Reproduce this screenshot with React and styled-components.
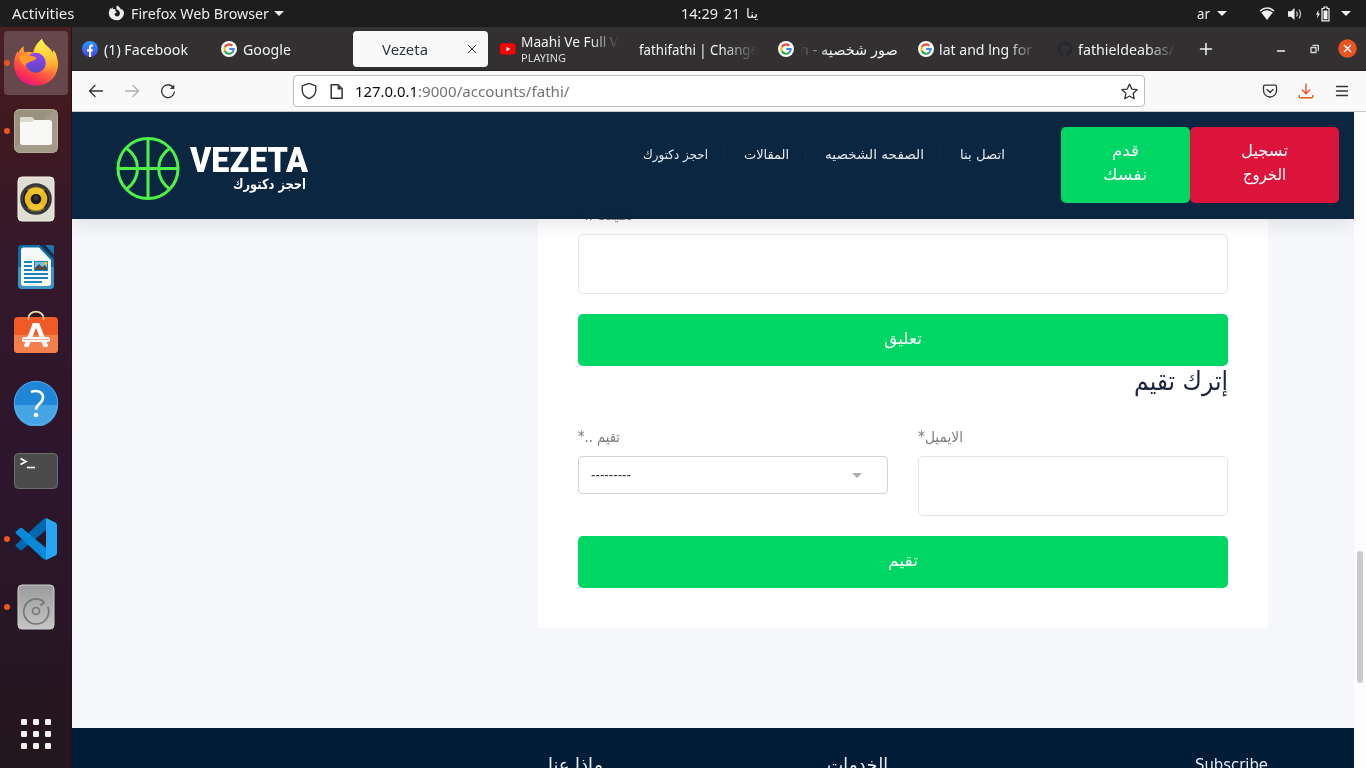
import React, { useLayoutEffect, useRef } from "react";
import styled, { createGlobalStyle } from "styled-components";

const Global = createGlobalStyle`
  *, *::before, *::after { box-sizing: border-box; }
  html, body { margin: 0; padding: 0; overflow: hidden; background: #f6f7fb; }
  body { font-family: "Noto Sans", "DejaVu Sans", sans-serif; }
  svg { display: block; flex: none; }
`;

/* ---------- text that is condensed to a given width ---------- */
const FitBox = styled.span`
  display: inline-block;
  flex: none;
  direction: ltr;
  text-align: left;
  white-space: nowrap;
  vertical-align: top;
  width: ${(p) => p.$w}px;
  font-size: ${(p) => (p.$size ? `${p.$size}px` : "inherit")};
`;
const FitInner = styled.span`
  display: inline-block;
  white-space: pre;
  transform-origin: 0 50%;
`;
function Fit({ w, size, rtl, children }) {
  const ref = useRef(null);
  useLayoutEffect(() => {
    const el = ref.current;
    el.style.transform = "none";
    const natural = el.getBoundingClientRect().width;
    if (natural) el.style.transform = `scaleX(${w / natural})`;
  }, [w, size, children]);
  return (
    <FitBox $w={w} $size={size}>
      <FitInner ref={ref} dir={rtl ? "rtl" : "ltr"}>{children}</FitInner>
    </FitBox>
  );
}

/* ---------- desktop shell ---------- */
const Desktop = styled.div`
  width: 1366px;
  height: 768px;
  display: flex;
  flex-direction: column;
  overflow: hidden;
`;
const TopBar = styled.div`
  height: 27px;
  flex: none;
  display: grid;
  grid-template-columns: 681px 1fr auto;
  align-items: center;
  padding-right: 15px;
  background: #1d1d1d;
  color: #ececec;
  font-size: 14.5px;
  line-height: 27px;
`;
const BarLeft = styled.div`
  display: flex;
  align-items: center;
  padding-left: 12px;
`;
const AppMenu = styled.div`
  display: flex;
  align-items: center;
  gap: 5.5px;
  margin-left: 33.5px;
`;
const Clock = styled.div`
  display: flex;
  gap: 6px;
`;
const Tray = styled.div`
  display: flex;
  align-items: center;
`;
const Caret = styled.i`
  width: 0;
  height: 0;
  border: 5px solid transparent;
  border-top: 5px solid #ececec;
  border-bottom: 0;
  margin-left: ${(p) => p.$gap || 0}px;
`;
const TraySlot = styled.span`
  margin-left: ${(p) => p.$gap}px;
`;
const Body = styled.div`
  flex: 1;
  min-height: 0;
  display: flex;
`;

/* ---------- dock ---------- */
const Dock = styled.nav`
  width: 72px;
  flex: none;
  display: flex;
  flex-direction: column;
  align-items: center;
  gap: 4px;
  padding-top: 4px;
  background: linear-gradient(180deg, #4a2023 0%, #40191f 12%, #35192b 30%, #2e162b 50%, #2b162b 65%, #271624 82%, #23161c 100%);
  border-right: 1px solid #22101f;
`;
const DockItem = styled.div`
  position: relative;
  width: 64px;
  height: 64px;
  display: flex;
  align-items: center;
  justify-content: center;
  padding-bottom: ${(p) => p.$lift || 0}px;
  border-radius: 4px;
  background: ${(p) => (p.$active ? "#66474b" : "transparent")};
  margin-top: ${(p) => (p.$last ? "auto" : 0)};
  margin-bottom: ${(p) => (p.$last ? "2px" : 0)};
  &::before {
    content: "";
    display: ${(p) => (p.$running ? "block" : "none")};
    position: absolute;
    left: 0;
    top: 29px;
    width: 6px;
    height: 6px;
    border-radius: 50%;
    background: #e95420;
  }
`;

/* ---------- browser ---------- */
const Browser = styled.main`
  flex: 1;
  min-width: 0;
  display: flex;
  flex-direction: column;
`;
const TabStrip = styled.div`
  height: 44px;
  flex: none;
  display: flex;
  align-items: center;
  padding-left: 2px;
  background: #323031;
  border-bottom: 1px solid #1f1d1e;
  color: #f2f2f2;
  font-size: 14.5px;
`;
const Tab = styled.div`
  width: 139.2px;
  height: 44px;
  flex: none;
  display: flex;
  align-items: center;
  gap: 5.5px;
  padding-left: 8px;
  overflow: hidden;
`;
const ActiveTab = styled.div`
  width: 135px;
  height: 36px;
  flex: none;
  margin: 0 4px 0 0.6px;
  display: flex;
  align-items: center;
  justify-content: space-between;
  padding: 0 11px 0 29px;
  border-radius: 4px;
  background: #f9f9fa;
  color: #2c3340;
`;
const fades = {
  right: "linear-gradient(90deg, #000 70%, transparent 100%)",
  left: "linear-gradient(270deg, #000 70%, transparent 100%)",
};
const TabText = styled.div`
  width: ${(p) => p.$w || 98}px;
  overflow: hidden;
  line-height: 20px;
  -webkit-mask-image: ${(p) => fades[p.$fade] || "none"};
  mask-image: ${(p) => fades[p.$fade] || "none"};
`;
const TabStack = styled.div`
  display: flex;
  flex-direction: column;
  margin-top: -2px;
  line-height: 16px;
`;
const TabStatus = styled.div`
  height: 13px;
  line-height: 13px;
  color: #dddddd;
`;
const WindowTools = styled.div`
  flex: 1;
  display: flex;
  align-items: center;
  padding-left: 10px;
`;
const ToolSlot = styled.span`
  margin-left: ${(p) => p.$gap || 0}px;
`;
const NavBar = styled.div`
  height: 41px;
  flex: none;
  display: flex;
  align-items: center;
  padding: 0 16px;
  background: #f9f9fa;
  border-bottom: 1px solid #c5c8ca;
`;
const NavButtons = styled.div`
  width: 205px;
  display: flex;
  gap: 20px;
`;
const UrlBar = styled.div`
  width: 852px;
  height: 32px;
  display: flex;
  align-items: center;
  padding: 0 6px;
  border: 1px solid #bcbcbc;
  border-radius: 4px;
  background: #fff;
  color: #0c0c0d;
  font-size: 14.6px;
`;
const UrlText = styled.div`
  flex: 1;
  display: flex;
  margin-left: 10px;
  line-height: 22px;
`;
const UrlPath = styled.span`
  color: #737373;
`;
const NavRight = styled.div`
  flex: 1;
  display: flex;
  justify-content: flex-end;
  gap: 20px;
`;
const Viewport = styled.div`
  flex: 1;
  min-height: 0;
  display: flex;
`;
const Scrollbar = styled.div`
  width: 12px;
  flex: none;
  padding: 439px 3px 0;
  background: #fdfdfd;
`;
const Thumb = styled.div`
  height: 132px;
  border-radius: 3px;
  background: #cbcbcb;
`;

/* ---------- site ---------- */
const Page = styled.div`
  flex: 1;
  min-width: 0;
  display: flex;
  flex-direction: column;
  overflow: hidden;
  background: #f5f7fb;
  font-family: "DejaVu Sans", sans-serif;
`;
const Header = styled.header`
  position: relative;
  z-index: 2;
  height: 107px;
  flex: none;
  display: flex;
  background: rgba(6, 34, 60, 0.98);
  box-shadow: 0 2px 22px rgba(0, 0, 0, 0.12);
  color: #e6eaee;
`;
const Brand = styled.div`
  width: 571px;
  display: flex;
  gap: 10px;
  padding: 25px 0 0 44px;
`;
const BrandWords = styled.div`
  display: flex;
  flex-direction: column;
  padding-top: 5px;
`;
const BrandName = styled.div`
  height: 36px;
  line-height: 38px;
  font-family: Roboto, sans-serif;
  font-weight: 900;
  color: #fff;
`;
const BrandTag = styled.div`
  height: 16px;
  line-height: 13px;
  padding-left: 43px;
  font-weight: 700;
  color: #fff;
`;
const Menu = styled.nav`
  width: 362px;
  height: 22px;
  margin-top: 32px;
  display: flex;
  justify-content: space-between;
  line-height: 22px;
`;
const MenuRule = styled.i`
  width: 1px;
  height: 14px;
  margin: 4px 3px 0 0;
  background: #1e2a38;
`;
const HeaderButtons = styled.div`
  display: flex;
  margin: 15px 0 0 56px;
  height: 76px;
`;
const HeaderButton = styled.div`
  width: ${(p) => p.$w}px;
  padding: 12px 1px 0 0;
  display: flex;
  flex-direction: column;
  align-items: center;
  line-height: 24px;
  border-radius: 5px;
  background: ${(p) => p.$bg};
  color: #fff;
`;
const Content = styled.section`
  height: 509px;
  flex: none;
  display: flex;
  justify-content: flex-end;
  align-items: flex-start;
  padding-right: 86px;
`;
const Card = styled.div`
  width: 730px;
  height: 429px;
  margin-top: -20px;
  padding: 5px 40px 0;
  background: #fff;
  color: #7d7d7d;
`;
const Label = styled.div`
  height: 22px;
  line-height: 22px;
  margin-bottom: 8px;
`;
const Field = styled.div`
  height: 60px;
  border: 1px solid #e4e5e6;
  border-radius: 5px;
  background: #fff;
`;
const Submit = styled.div`
  height: 52px;
  margin-top: 20px;
  padding-bottom: 3px;
  display: flex;
  align-items: center;
  justify-content: center;
  border-radius: 5px;
  background: #00d664;
  color: #fff;
`;
const Heading = styled.h3`
  margin: 0;
  height: 60px;
  line-height: 30px;
  text-align: right;
  font-weight: 400;
  color: #1c2340;
`;
const Columns = styled.div`
  display: grid;
  grid-template-columns: 1fr 1fr;
  gap: 30px;
`;
const Select = styled.div`
  height: 38px;
  display: flex;
  align-items: center;
  justify-content: space-between;
  padding: 0 25px 0 12px;
  border: 1px solid #ced4da;
  border-radius: 4px;
  color: #343a40;
  & > i { border-top-color: #a9b0b5; }
`;
const Footer = styled.footer`
  flex: none;
  height: 60px;
  display: flex;
  padding: 24px 0 0 476px;
  background: #001d38;
  color: #e9edf0;
  line-height: 26px;
`;
const FooterCell = styled.div`
  margin-right: ${(p) => p.$after || 0}px;
`;

/* ---------- icons ---------- */
const FirefoxLogo = () => (
  <svg width="46" height="48" viewBox="0 0 46 48">
    <defs>
      <linearGradient id="fa" x1="0.8" y1="0" x2="0.3" y2="1">
        <stop offset="0" stopColor="#ffe14a" /><stop offset=".35" stopColor="#ffb32c" />
        <stop offset=".6" stopColor="#ff6b3a" /><stop offset=".85" stopColor="#fb2d56" /><stop offset="1" stopColor="#e31587" />
      </linearGradient>
      <linearGradient id="fb" x1="0" y1="0" x2="0" y2="1">
        <stop offset="0" stopColor="#9646f0" /><stop offset="1" stopColor="#5a45c4" />
      </linearGradient>
      <linearGradient id="fc" x1="0.5" y1="0" x2="0.6" y2="1">
        <stop offset="0" stopColor="#fff44f" /><stop offset=".5" stopColor="#ffcf3c" /><stop offset="1" stopColor="#ff9a36" stopOpacity=".2" />
      </linearGradient>
    </defs>
    <path d="M29 0c1 4 5 7 8 10 1 1 2 2 2 4l1.500-3c3 4 4.500 9 4.500 14 0 13-10 21.500-22 21.500S1 38 1 25c0-5 1-9 4-13v3c1-3 3-6 5.500-8 0 2 0 5 1.500 6.500 2-1 5-1 8 0C21 8 24 4 29 0z" fill="url(#fa)" />
    <path d="M29 0c-5 4-7.500 9-7 14 4 0 7 2 9 5 3 5 2 11-3 15 9 0 15-7 15-15 0-2 0-4-1-6l-3 1c0-2-1-3-2-4-3-3-7-6-8-10z" fill="url(#fc)" />
    <circle cx="22.700" cy="23.800" r="10" fill="url(#fb)" />
    <path d="M6 18c3-2.500 7-3 10-1.500 3 0 6 1 7.500 2.500-.5 1.500-2.500 2.500-4.500 3-2 .7-4 1.500-5.500 2.500L12 27c-3-2-5-5-6-9z" fill="#ff9a2a" />
  </svg>
);
const Files = () => (
  <svg width="46" height="46" viewBox="0 0 46 46">
    <rect x="1.500" y="1.500" width="43" height="43" rx="5" fill="#9a917f" stroke="#b5ae9f" />
    <path d="M2 40L40 2h4v42H6z" fill="#a79f8f" opacity=".7" />
    <path d="M7 14v-3q0-2 2-2h9q2 0 3 2l1 2h15v5H7z" fill="#dcd9cf" />
    <rect x="7" y="12" width="32" height="25" rx="2.500" fill="#f8f8f7" />
    <path d="M7 11q0-2 2-2h9q2 0 3 3l-2 2H7z" fill="#dcd9cf" />
  </svg>
);
const Rhythmbox = () => (
  <svg width="38" height="46" viewBox="0 0 38 46">
    <rect x="1" y="1" width="36" height="44" rx="4" fill="#e0ddd3" stroke="#f4f3ec" />
    <circle cx="19" cy="23" r="15.800" fill="#36373b" />
    <circle cx="19" cy="23" r="13.500" fill="#1c1c22" stroke="#555" strokeWidth=".6" />
    <circle cx="19" cy="23" r="11.300" fill="#ecb919" />
    <path d="M19 23L10 14a13 13 0 0118 0zM19 23l9 9a13 13 0 01-18 0z" fill="#f6d13c" opacity=".55" />
    <circle cx="19" cy="23" r="5.300" fill="#1d1d20" />
    <circle cx="19" cy="22" r="2.500" fill="#37373b" />
  </svg>
);
const Writer = () => (
  <svg width="38" height="46" viewBox="0 0 38 46">
    <path d="M5 1h18l14 14v26q0 4-4 4H5q-4 0-4-4V5q0-4 4-4z" fill="#0e6ea5" />
    <path d="M1 23h36v18q0 4-4 4H5q-4 0-4-4z" fill="#3a94c5" />
    <path d="M6 3.500h16L34 16v23q0 3-3 3H7q-3 0-3-3V6q0-2.500 2-2.500z" fill="#f7f8f8" />
    <path d="M28 1h7q2 0 2 2v8z" fill="#1579b3" />
    <path d="M26 1l11 11v3L23 1z" fill="#123650" />
    <g fill="#1c83bd"><path d="M7 17h8v2H7zM7 21h8v2H7zM7 25h8v2H7zM7 29h24v2H7zM7 33h24v2H7zM7 37h18v2H7zM17 17h14v10H17z" /></g>
    <path d="M18 18h12v8H18z" fill="#78bddd" />
    <path d="M18 26v-2l4-4 3 3 3-2 2 3v2z" fill="#4c4c48" />
    <circle cx="28.800" cy="19.200" r="1.600" fill="#f5c22b" />
  </svg>
);
const Software = () => (
  <svg width="46" height="46" viewBox="0 0 46 46">
    <path d="M15.500 11.500V9a7.500 6.300 0 0115 0v2.500" fill="none" stroke="#f3d9a6" strokeWidth="1.800" />
    <rect x="1" y="8" width="44" height="36" rx="4" fill="#f05a26" />
    <path d="M1 26h44v14q0 4-4 4H5q-4 0-4-4z" fill="#f37f4d" />
    <path d="M15.500 10.500V8M30.500 10.500V8" fill="none" stroke="#f3d9a6" strokeWidth="1.800" />
    <g fill="#fff" stroke="#fff">
      <path d="M22 15L13 38M24 15L33 38" strokeWidth="4.800" fill="none" />
      <path d="M19.800 14h6.400v3h-6.400z" stroke="none" />
      <path d="M11.500 30.500h23" strokeWidth="5" strokeLinecap="round" />
    </g>
    <path d="M10 30.500h26" stroke="#f4ad91" strokeWidth="1" />
    <path d="M11 38h24v4H11z" fill="#f37f4d" />
  </svg>
);
const Help = () => (
  <svg width="46" height="46" viewBox="0 0 46 46">
    <circle cx="23" cy="23" r="22" fill="#2086da" />
    <path d="M1 25h44a22 22 0 01-44 0z" fill="#45a4e4" />
    <circle cx="23" cy="23" r="21.700" fill="none" stroke="#61b2ec" strokeWidth=".8" />
    <path d="M18 12c6-2.500 12 0 12 5.500 0 6-7 6.500-7 12" fill="none" stroke="#fff" strokeWidth="2.600" />
    <circle cx="23" cy="35" r="2.300" fill="#fff" />
  </svg>
);
const Terminal = () => (
  <svg width="46" height="38" viewBox="0 0 46 38">
    <rect x="1.500" y="1.500" width="43" height="35" rx="4" fill="#4b4b4b" stroke="#6e6e6e" />
    <path d="M7.500 6.500l5.500 3-5.500 3" fill="none" stroke="#fff" strokeWidth="1.800" />
    <path d="M14 15.500h8" stroke="#fff" strokeWidth="1.700" />
  </svg>
);
const Code = () => (
  <svg width="44" height="44" viewBox="0 0 44 44">
    <path d="M32 1v12L8 33q-1 .7-2 0l-4-3.500q-1-1 0-2L29.500 2z" fill="#0069ad" />
    <path d="M32 43V31L8 11q-1-.7-2 0l-4 3.500q-1 1 0 2L29.500 42z" fill="#098ad9" />
    <path d="M32 1l9.500 4.500Q43 6.500 43 8v28q0 1.500-1.500 2.500L32 43z" fill="#27a5f2" />
  </svg>
);
const Disk = () => (
  <svg width="38" height="46" viewBox="0 0 38 46">
    <defs><linearGradient id="dk" x1="0" y1="0" x2="0" y2="1"><stop offset="0" stopColor="#9b9b9b" /><stop offset="1" stopColor="#c5c5c5" /></linearGradient></defs>
    <rect x="1" y="1" width="36" height="44" rx="4" fill="url(#dk)" stroke="#cfcfcf" />
    <path d="M30.800 22.800a12.500 12.500 0 11-4.800-5.800l1 1.500-3.500 3" fill="none" stroke="#777" strokeWidth="1.700" />
    <circle cx="19" cy="27" r="3.500" fill="none" stroke="#777" strokeWidth="1.700" />
  </svg>
);
const AppGrid = () => (
  <svg width="30" height="30" viewBox="0 0 30 30" fill="#f2f1ef">
    {[0, 12, 24].map((y) => [0, 12, 24].map((x) => <rect key={`${x}-${y}`} x={x} y={y} width="6" height="6" rx="1.300" />))}
  </svg>
);
const FirefoxMono = () => (
  <svg width="17" height="17" viewBox="0 0 17 17">
    <path d="M9 .5c2 1 3.500 2.500 4 4.500l.8-1.300c1.500 1.500 2.200 3 2.200 5A7.700 7.700 0 01.8 9C.8 6.500 1.500 4.500 2.500 3l.6 1L4.500 2.300l.6 1.900c.8-.3 1.500-.3 2.300 0C7 6 7.500 6.500 9 7 8.500 8 7 8 6.500 9c0 3 4.800 3.500 5.400 0C12.200 6.500 10.500 5 9 4.500 8 3 8.500 1.500 9 .5z" fill="#efefef" />
  </svg>
);
const Facebook = () => (
  <svg width="16" height="16" viewBox="0 0 16 16">
    <defs><linearGradient id="fk" x1="0" y1="0" x2="0" y2="1"><stop offset="0" stopColor="#2a9bff" /><stop offset="1" stopColor="#4a3ff0" /></linearGradient></defs>
    <circle cx="8" cy="8" r="8" fill="url(#fk)" />
    <path d="M7 16v-5.500H5V8.200h2V6.500C7 4.300 8.300 3.200 10.900 3.600v2C9.600 5.400 9.100 5.800 9.100 6.800v1.400h1.800l-.4 2.300H9.100V16z" fill="#fff" />
  </svg>
);
const Google = () => (
  <svg width="16" height="16" viewBox="0 0 16 16" fill="none" strokeWidth="2.100">
    <circle cx="8" cy="8" r="8" fill="#fff" />
    <path d="M11.300 4.700A4.700 4.700 0 003.800 6" stroke="#ea4335" />
    <path d="M3.900 5.800a4.700 4.700 0 000 4.400" stroke="#fbbc05" />
    <path d="M3.800 10a4.700 4.700 0 007.500 1.400" stroke="#34a853" />
    <path d="M8.200 8h4.500a4.700 4.700 0 01-1.500 3.500" stroke="#4285f4" />
  </svg>
);
const Youtube = () => (
  <svg width="16" height="16" viewBox="0 0 16 16">
    <rect x="0" y="2.300" width="15.500" height="11.200" rx="2.800" fill="#f00" />
    <path d="M6.500 5.700v4.600l3.800-2.300z" fill="#fff" />
  </svg>
);
const Github = () => (
  <svg width="16" height="16" viewBox="0 0 16 16">
    <path d="M8 .5a7.500 7.500 0 00-2.400 14.600c.4.100.5-.2.500-.4v-1.400c-2 .5-2.600-.9-2.600-.9-.4-.9-.9-1.100-.9-1.100-.7-.5.100-.5.100-.5.800.1 1.200.8 1.200.8.700 1.200 1.800.9 2.200.7.100-.5.300-.9.500-1-1.700-.2-3.500-.9-3.500-3.800 0-.8.300-1.500.8-2-.1-.2-.4-1 0-2 0 0 .7-.2 2.100.8a7 7 0 014 0c1.400-1 2.100-.8 2.100-.8.400 1 .1 1.800 0 2 .5.500.8 1.200.8 2 0 2.900-1.800 3.600-3.500 3.800.3.200.5.700.5 1.400v2c0 .2.100.5.500.4A7.500 7.500 0 008 .5z" fill="#24292e" />
  </svg>
);
const Line = ({ size = 16, color = "#333", sw = 1.3, d, children }) => (
  <svg width={size} height={size} viewBox="0 0 16 16" fill="none" stroke={color} strokeWidth={sw} strokeLinecap="round" strokeLinejoin="round">
    {d && <path d={d} />}
    {children}
  </svg>
);
const Wifi = () => (
  <svg width="16" height="14" viewBox="0 0 16 14"><path d="M1 4Q8-2 15 4" fill="none" stroke="#e8e8e8" strokeWidth="1.600" /><path d="M2.300 5.600Q8 1 13.700 5.600L8 13z" fill="#f2f2f2" /></svg>
);
const Volume = () => (
  <svg width="16" height="14" viewBox="0 0 16 14"><path d="M1 4.300h3L7.500 1v12L4 9.700H1z" fill="#f2f2f2" /><path d="M9.500 4.500q1.800 2.500 0 5M12 2.500q3 4.500 0 9" stroke="#c8c8c8" strokeWidth="1.200" fill="none" /></svg>
);
const Battery = () => (
  <svg width="14" height="16" viewBox="0 0 14 16"><path d="M2.500 4L0 8.500h1.600L1 12.500l3-5H2.300z" fill="#f2f2f2" /><path d="M6 2.500h2V1h3v1.500h2v12.300H6z" fill="none" stroke="#f2f2f2" strokeWidth="1.200" /><path d="M7.500 4.500h4v8.800h-4z" fill="#f2f2f2" /></svg>
);
const Ball = () => (
  <svg width="64" height="64" viewBox="0 0 64 64" fill="none" stroke="#4cf346" strokeWidth="3">
    <circle cx="32" cy="31.500" r="30" />
    <path d="M32 2v60M2 31.500h60M10.500 11.200Q21.500 19 21.500 31.500T10.500 52.200M53.700 11.200Q42.700 19 42.700 31.500T53.700 52.200" />
  </svg>
);

export default function App() {
  return (
    <Desktop>
      <Global />
      <TopBar>
        <BarLeft>
          <Fit w={62.5}>Activities</Fit>
          <AppMenu>
            <FirefoxMono />
            <Fit w={138}>Firefox Web Browser</Fit>
            <Caret />
          </AppMenu>
        </BarLeft>
        <Clock>
          <Fit w={37}>14:29</Fit>
          <Fit w={16}>21</Fit>
          <Fit w={12} size={13} rtl>ينا</Fit>
        </Clock>
        <Tray>
          <Fit w={13}>ar</Fit>
          <Caret $gap={7} />
          <TraySlot $gap={32}><Wifi /></TraySlot>
          <TraySlot $gap={12}><Volume /></TraySlot>
          <TraySlot $gap={13}><Battery /></TraySlot>
          <Caret $gap={11} />
        </Tray>
      </TopBar>
      <Body>
        <Dock>
          <DockItem $active $running><FirefoxLogo /></DockItem>
          <DockItem $running><Files /></DockItem>
          <DockItem><Rhythmbox /></DockItem>
          <DockItem><Writer /></DockItem>
          <DockItem $lift={6}><Software /></DockItem>
          <DockItem><Help /></DockItem>
          <DockItem><Terminal /></DockItem>
          <DockItem $running><Code /></DockItem>
          <DockItem $running><Disk /></DockItem>
          <DockItem $last><AppGrid /></DockItem>
        </Dock>
        <Browser>
          <TabStrip>
            <Tab><Facebook /><TabText><Fit w={84}>(1) Facebook</Fit></TabText></Tab>
            <Tab><Google /><TabText><Fit w={48}>Google</Fit></TabText></Tab>
            <ActiveTab>
              <Fit w={46}>Vezeta</Fit>
              <Line size={10} sw={1.6} d="M2 2l12 12M14 2L2 14" />
            </ActiveTab>
            <Tab>
              <Youtube />
              <TabStack>
                <TabText $fade="right"><Fit w={97}>Maahi Ve Full V</Fit></TabText>
                <TabStatus><Fit w={45} size={11}>PLAYING</Fit></TabStatus>
              </TabStack>
            </Tab>
            <Tab><TabText $w={118} $fade="right"><Fit w={119}>fathifathi | Change</Fit></TabText></Tab>
            <Tab><Google /><TabText $w={98} $fade="left"><Fit w={98} rtl>صور شخصيه - h</Fit></TabText></Tab>
            <Tab><Google /><TabText $w={98} $fade="right"><Fit w={93}>lat and lng for</Fit></TabText></Tab>
            <Tab><Github /><TabText $w={98} $fade="right"><Fit w={96}>fathieldeabas/</Fit></TabText></Tab>
            <WindowTools>
              <Line size={16} color="#f4f4f4" sw={1.5} d="M8 2.500v11M2.500 8h11" />
              <ToolSlot $gap={59}><Line size={16} color="#f4f4f4" sw={1.3} d="M4.500 10h7" /></ToolSlot>
              <ToolSlot $gap={17}><Line size={16} color="#d8d8d8" sw={1.3} d="M5 6.500h5v5H5zM7 4.300h5.300V9.500" /></ToolSlot>
              <ToolSlot $gap={16.5}>
                <svg width="19" height="19" viewBox="0 0 19 19"><circle cx="9.500" cy="9.500" r="9.300" fill="#e95420" /><path d="M6 6l7 7M13 6l-7 7" stroke="#fff" strokeWidth="1.400" /></svg>
              </ToolSlot>
            </WindowTools>
          </TabStrip>
          <NavBar>
            <NavButtons>
              <Line d="M14.500 8H1.500M7 2.500L1.500 8 7 13.500" />
              <Line color="#b0b0b0" d="M1.500 8h13M9 2.500L14.500 8 9 13.500" />
              <Line d="M13.300 4.500A6.400 6.400 0 1014.400 9">
                <path d="M14.300 1.500v4.500H9.800z" fill="#333" stroke="none" />
              </Line>
            </NavButtons>
            <UrlBar>
              <Line size={18} sw={1.2} d="M8 1.300L14 3.500v3.500c0 4-2.500 6.300-6 7.700-3.500-1.400-6-3.700-6-7.700V3.500z" />
              <ToolSlot $gap={10}>
                <Line size={17} sw={1.4} d="M3 1.700h6.500L13.300 5.500v8.800H3z"><path d="M9 2v4h4z" fill="#333" stroke="none" /></Line>
              </ToolSlot>
              <UrlText>
                <Fit w={63}>127.0.0.1</Fit>
                <UrlPath><Fit w={151.5}>:9000/accounts/fathi/</Fit></UrlPath>
              </UrlText>
              <Line size={17} sw={1.2} d="M8 1l2.100 4.700 5.100.6-3.800 3.400 1 5.100L8 12.300l-4.400 2.500 1-5.100L.8 6.300l5.100-.6z" />
            </UrlBar>
            <NavRight>
              <Line sw={1.3} d="M3 2.200h10q1.500 0 1.500 1.500V7.500a6.500 6.500 0 01-13 0V3.700q0-1.500 1.500-1.500zM5 6.500l3 3 3-3" />
              <Line color="#e95420" sw={1.4} d="M8 1v9.500M4.300 7L8 10.700 11.700 7M1.200 12.500v1q0 1.300 1.300 1.300h11q1.300 0 1.300-1.300v-1" />
              <Line sw={1.3} d="M2.500 3.500h11M2.500 8h11M2.500 12.500h11" />
            </NavRight>
          </NavBar>
          <Viewport>
            <Page>
              <Header>
                <Brand>
                  <Ball />
                  <BrandWords>
                    <BrandName><Fit w={118} size={35}>VEZETA</Fit></BrandName>
                    <BrandTag><Fit w={73} size={14} rtl>احجز دكتورك</Fit></BrandTag>
                  </BrandWords>
                </Brand>
                <Menu>
                  <Fit w={65} size={13} rtl>احجز دكتورك</Fit><MenuRule />
                  <Fit w={45} size={13} rtl>المقالات</Fit><MenuRule />
                  <Fit w={99} size={13} rtl>الصفحه الشخصيه</Fit><MenuRule />
                  <Fit w={45} size={13} rtl>اتصل بنا</Fit>
                </Menu>
                <HeaderButtons>
                  <HeaderButton $w={129} $bg="#00d664">
                    <Fit w={27} size={16} rtl>قدم</Fit>
                    <Fit w={44} size={16} rtl>نفسك</Fit>
                  </HeaderButton>
                  <HeaderButton $w={149} $bg="#dc143c">
                    <Fit w={47} size={16} rtl>تسجيل</Fit>
                    <Fit w={43} size={16} rtl>الخروج</Fit>
                  </HeaderButton>
                </HeaderButtons>
              </Header>
              <Content>
                <Card>
                  <Label><Fit w={55} size={15} rtl>تعليقك ..*</Fit></Label>
                  <Field />
                  <Submit><Fit w={38} size={16} rtl>تعليق</Fit></Submit>
                  <Heading><Fit w={94} size={26} rtl>إترك تقيم</Fit></Heading>
                  <Columns>
                    <div>
                      <Label><Fit w={42} size={15} rtl>تقيم ..*</Fit></Label>
                      <Select><Fit w={40} size={14}>---------</Fit><Caret /></Select>
                    </div>
                    <div>
                      <Label><Fit w={45} size={15} rtl>الايميل*</Fit></Label>
                      <Field />
                    </div>
                  </Columns>
                  <Submit><Fit w={30} size={16} rtl>تقيم</Fit></Submit>
                </Card>
              </Content>
              <Footer>
                <FooterCell $after={224}><Fit w={55} size={18} rtl>ماذا عنا</Fit></FooterCell>
                <FooterCell $after={307}><Fit w={61} size={18} rtl>الخدمات</Fit></FooterCell>
                <FooterCell><Fit w={73} size={15.5}>Subscribe</Fit></FooterCell>
              </Footer>
            </Page>
            <Scrollbar><Thumb /></Scrollbar>
          </Viewport>
        </Browser>
      </Body>
    </Desktop>
  );
}
